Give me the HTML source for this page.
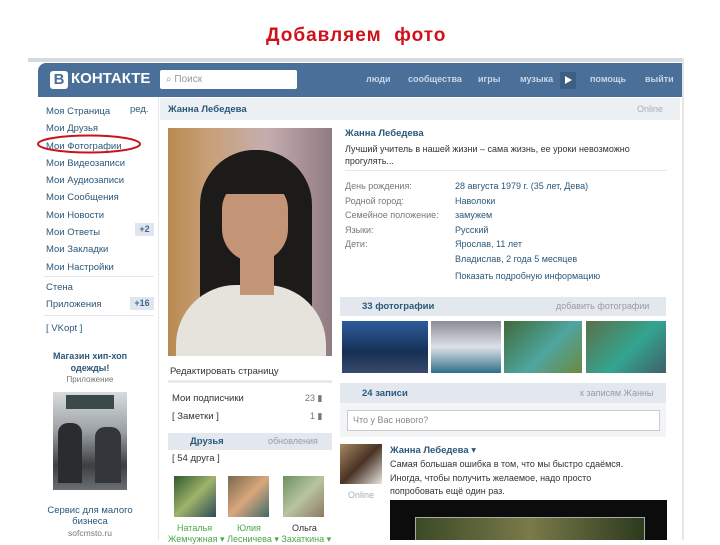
<!DOCTYPE html>
<html><head><meta charset="utf-8"><style>
*{margin:0;padding:0;box-sizing:border-box}
body{width:720px;height:540px;background:#fff;position:relative;overflow:hidden;font-family:"Liberation Sans","DejaVu Sans",sans-serif;font-size:9px;color:#333}
.a{position:absolute;white-space:nowrap}
.l{color:#2b587a}
.g{color:#777}
.bar{position:absolute;background:#e3e8ee;}
</style></head><body>
<div class="a" style="left:266px;top:25px;font-size:19px;font-weight:bold;color:#d0111b;letter-spacing:1px">Добавляем&nbsp; фото</div>
<div class="a" style="left:28px;top:58px;width:654px;height:4px;background:#d7dadd"></div>
<div class="a" style="left:682px;top:58px;width:2px;height:482px;background:#e4e6e8"></div>
<!-- header -->
<div class="a" style="left:38px;top:63px;width:644px;height:34px;background:#4a6f99;border-radius:8px 0 0 0"></div>
<div class="a" style="left:50px;top:71px;width:18px;height:18px;background:#fff;border-radius:3px;color:#4a6f99;font-weight:bold;font-size:15px;text-align:center;line-height:18px">В</div>
<div class="a" style="left:71px;top:70px;color:#fff;font-weight:bold;font-size:15px">КОНТАКТЕ</div>
<div class="a" style="left:160px;top:70px;width:137px;height:19px;background:#fff;border-radius:2px;color:#999;padding:4px 0 0 6px;font-size:10px">⌕ Поиск</div>
<div class="a" style="left:366px;top:74px;color:#c9d6e6;font-weight:bold;font-size:9px">люди</div>
<div class="a" style="left:408px;top:74px;color:#c9d6e6;font-weight:bold;font-size:9px">сообщества</div>
<div class="a" style="left:478px;top:74px;color:#c9d6e6;font-weight:bold;font-size:9px">игры</div>
<div class="a" style="left:520px;top:74px;color:#c9d6e6;font-weight:bold;font-size:9px">музыка</div>
<div class="a" style="left:560px;top:72px;width:16px;height:17px;background:#3d5f86"></div>
<div class="a" style="left:565px;top:76px;width:0;height:0;border-left:7px solid #fff;border-top:4.5px solid transparent;border-bottom:4.5px solid transparent"></div>
<div class="a" style="left:590px;top:74px;color:#c9d6e6;font-weight:bold;font-size:9px">помощь</div>
<div class="a" style="left:645px;top:74px;color:#c9d6e6;font-weight:bold;font-size:9px">выйти</div>
<!-- left menu -->
<div class="a" style="left:158px;top:97px;width:1px;height:443px;background:#e4e8ec"></div>
<div class="a l" style="left:46px;top:103px;line-height:17.3px;font-size:9.5px">Моя Страница<br>Мои Друзья<br>Мои Фотографии<br>Мои Видеозаписи<br>Мои Аудиозаписи<br>Мои Сообщения<br>Мои Новости<br>Мои Ответы<br>Мои Закладки<br>Мои Настройки</div>
<div class="a l" style="left:130px;top:104px;font-size:9.5px">ред.</div>
<div class="a" style="left:135px;top:223px;width:19px;height:13px;background:#dfe6ee;color:#45688e;font-weight:bold;text-align:center;line-height:13px">+2</div>
<svg class="a" style="left:36px;top:133px" width="106" height="22"><ellipse cx="53" cy="11" rx="51" ry="8.5" fill="none" stroke="#c8141c" stroke-width="2"/></svg>
<div class="a" style="left:44px;top:276px;width:110px;height:1px;background:#e4e8ec"></div>
<div class="a l" style="left:46px;top:282px;font-size:9.5px">Стена</div>
<div class="a l" style="left:46px;top:299px;font-size:9.5px">Приложения</div>
<div class="a" style="left:130px;top:297px;width:24px;height:13px;background:#dfe6ee;color:#45688e;font-weight:bold;text-align:center;line-height:13px">+16</div>
<div class="a" style="left:44px;top:315px;width:110px;height:1px;background:#e4e8ec"></div>
<div class="a l" style="left:46px;top:323px;font-size:9.5px">[ VKopt ]</div>
<div class="a" style="left:44px;top:350px;width:92px;text-align:center;color:#2b587a;font-weight:bold;white-space:normal;line-height:12px">Магазин хип-хоп одежды!</div>
<div class="a g" style="left:44px;top:375px;width:92px;text-align:center;font-size:8px">Приложение</div>
<div class="a" style="left:53px;top:392px;width:74px;height:98px;background:linear-gradient(#d9dcde,#9aa0a4 40%,#3c3f42 75%,#6b6f72)"></div>
<div class="a" style="left:66px;top:395px;width:48px;height:14px;background:#3a4a48"></div>
<div class="a" style="left:58px;top:423px;width:24px;height:60px;background:#2a2c2e;border-radius:10px 10px 0 0"></div>
<div class="a" style="left:95px;top:427px;width:26px;height:56px;background:#33363a;border-radius:10px 10px 0 0"></div>
<div class="a" style="left:44px;top:505px;width:92px;text-align:center;color:#2b587a;white-space:normal;line-height:11px;font-size:9.5px">Сервис для малого бизнеса</div>
<div class="a g" style="left:44px;top:528px;width:92px;text-align:center;font-size:8.5px">sofcmsto.ru</div>
<!-- main header -->
<div class="bar" style="left:160px;top:98px;width:520px;height:22px;background:#edf0f3"></div>
<div class="a l" style="left:168px;top:104px;font-weight:bold;font-size:9.5px">Жанна Лебедева</div>
<div class="a" style="left:637px;top:104px;color:#aab;font-size:9px">Online</div>
<!-- photo -->
<div class="a" style="left:168px;top:128px;width:164px;height:228px;background:linear-gradient(90deg,#b98a52 0%,#c8a077 25%,#c6aeb0 60%,#8f7b82 100%)"></div>
<div class="a" style="left:200px;top:150px;width:112px;height:170px;background:#1d1a1a;border-radius:55px 55px 10px 10px"></div>
<div class="a" style="left:222px;top:180px;width:66px;height:82px;background:#c49476;border-radius:30px 30px 34px 34px"></div>
<div class="a" style="left:214px;top:150px;width:84px;height:44px;background:#1d1a1a;border-radius:40px 40px 5px 5px"></div>
<div class="a" style="left:176px;top:285px;width:150px;height:71px;background:#e6e2dc;border-radius:60px 60px 0 0"></div>
<div class="a" style="left:240px;top:255px;width:34px;height:40px;background:#c49476"></div>
<div class="a" style="left:170px;top:366px;font-size:9.5px;color:#333">Редактировать страницу</div>
<div class="a" style="left:168px;top:380px;width:164px;height:3px;background:#e8ebee"></div>
<div class="a" style="left:172px;top:393px;font-size:9.5px">Мои подписчики</div>
<div class="a g" style="left:305px;top:393px">23 ▮</div>
<div class="a" style="left:172px;top:411px;font-size:9.5px">[ Заметки ]</div>
<div class="a g" style="left:310px;top:411px">1 ▮</div>
<div class="bar" style="left:168px;top:433px;width:164px;height:17px"></div>
<div class="a l" style="left:190px;top:436px;font-weight:bold;font-size:9.5px">Друзья</div>
<div class="a" style="left:268px;top:436px;color:#99a;font-size:9px">обновления</div>
<div class="a" style="left:172px;top:453px;font-size:9.5px">[ 54 друга ]</div>
<div class="a" style="left:174px;top:476px;width:42px;height:41px;background:linear-gradient(135deg,#2f5a32,#9fb36a 50%,#2d4a55)"></div>
<div class="a" style="left:228px;top:476px;width:41px;height:41px;background:linear-gradient(135deg,#7a6850,#d9a77c 50%,#3f6b6a)"></div>
<div class="a" style="left:283px;top:476px;width:41px;height:41px;background:linear-gradient(135deg,#6e9060,#b8c4a0 50%,#8c7a62)"></div>
<div class="a" style="left:177px;top:523px;color:#4aa84a;font-size:9px">Наталья</div>
<div class="a" style="left:237px;top:523px;color:#4aa84a;font-size:9px">Юлия</div>
<div class="a" style="left:292px;top:523px;font-size:9px">Ольга</div>
<div class="a" style="left:168px;top:534px;color:#4aa84a;font-size:9px">Жемчужная ▾ Лесничева ▾ Захаткина ▾</div>
<!-- info -->
<div class="a l" style="left:345px;top:128px;font-weight:bold;font-size:9.5px">Жанна Лебедева</div>
<div class="a" style="left:345px;top:143px;font-size:9px;line-height:12px">Лучший учитель в нашей жизни – сама жизнь, ее уроки невозможно<br>прогулять...</div>
<div class="a" style="left:345px;top:170px;width:322px;height:1px;background:#e4e8ec"></div>
<div class="a g" style="left:345px;top:179px;line-height:14.5px;font-size:9px">День рождения:<br>Родной город:<br>Семейное положение:<br>Языки:<br>Дети:</div>
<div class="a" style="left:455px;top:179px;line-height:14.5px;font-size:9px;color:#2b587a">28 августа 1979 г. (35 лет, Дева)<br>Наволоки<br>замужем<br>Русский<br>Ярослав, 11 лет<br>Владислав, 2 года 5 месяцев</div>
<div class="a" style="left:455px;top:271px;font-size:9px;color:#2b587a">Показать подробную информацию</div>
<div class="bar" style="left:340px;top:297px;width:326px;height:19px"></div>
<div class="a l" style="left:362px;top:301px;font-weight:bold;font-size:9.5px">33 фотографии</div>
<div class="a" style="left:556px;top:301px;color:#99a;font-size:9px">добавить фотографии</div>
<div class="a" style="left:342px;top:321px;width:86px;height:52px;background:linear-gradient(#2d5c9c,#173056 60%,#384a6a)"></div>
<div class="a" style="left:431px;top:321px;width:70px;height:52px;background:linear-gradient(#8b8c96,#dde2e6 50%,#2e6f8a)"></div>
<div class="a" style="left:504px;top:321px;width:78px;height:52px;background:linear-gradient(135deg,#3f6a38,#4fa5a0 55%,#6b8a40)"></div>
<div class="a" style="left:586px;top:321px;width:80px;height:52px;background:linear-gradient(135deg,#5c6f4a,#33a590 55%,#40606a)"></div>
<div class="bar" style="left:340px;top:383px;width:326px;height:20px"></div>
<div class="a l" style="left:362px;top:388px;font-weight:bold;font-size:9.5px">24 записи</div>
<div class="a" style="left:580px;top:388px;color:#99a;font-size:9px">к записям Жанны</div>
<div class="a" style="left:340px;top:403px;width:326px;height:34px;background:#f2f4f6"></div>
<div class="a" style="left:347px;top:410px;width:313px;height:21px;background:#fff;border:1px solid #c5ccd3;color:#888;padding:4px 5px;font-size:9px">Что у Вас нового?</div>
<div class="a" style="left:340px;top:444px;width:42px;height:40px;background:linear-gradient(135deg,#a88860,#4a3326 50%,#e9e4df)"></div>
<div class="a" style="left:348px;top:490px;color:#aab;font-size:9px">Online</div>
<div class="a l" style="left:390px;top:445px;font-weight:bold;font-size:9.5px">Жанна Лебедева ▾</div>
<div class="a" style="left:390px;top:458px;font-size:9px;line-height:13.5px">Самая большая ошибка в том, что мы быстро сдаёмся.<br>Иногда, чтобы получить желаемое, надо просто<br>попробовать ещё один раз.</div>
<div class="a" style="left:390px;top:500px;width:277px;height:40px;background:#0c0c0c"></div>
<div class="a" style="left:415px;top:517px;width:230px;height:23px;border:1px solid #aaa;border-bottom:none;background:linear-gradient(90deg,#3b4a26,#7a7a4a 50%,#2c3a1e)"></div>
</body></html>
